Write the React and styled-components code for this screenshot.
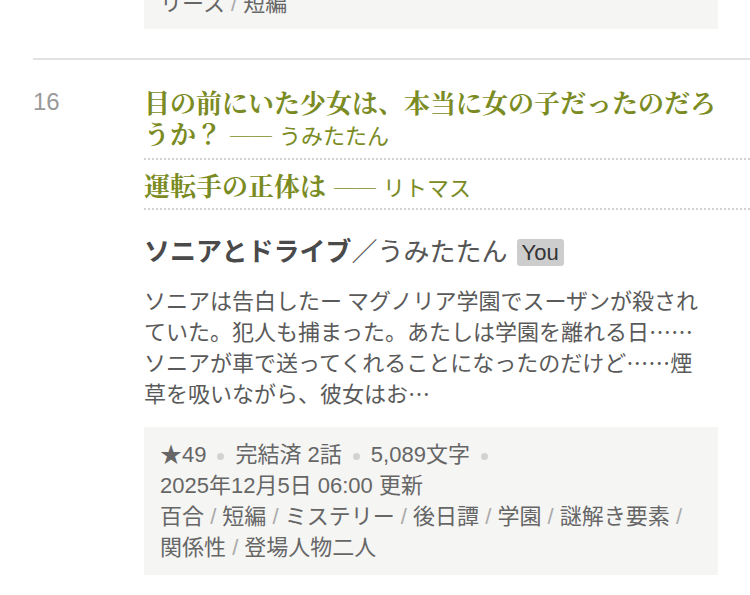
import styled, { createGlobalStyle } from 'styled-components'

const GlobalStyle = createGlobalStyle`
  body {
    margin: 0;
    background: #fff;
    font-family: "Liberation Sans", "Noto Sans CJK JP", sans-serif;
    overflow: hidden;
  }
`

const Page = styled.div`
  padding-left: 33px;
  width: 717px;
`

const PrevTail = styled.div`
  margin-top: -24px;
  padding-left: 111px;
  margin-bottom: 29px;
`

const Entry = styled.section`
  display: flex;
  padding-top: 26px;
  border-top: 2px solid #e2e2e2;
`

const Rank = styled.div`
  width: 111px;
  flex-shrink: 0;
  font-size: 24px;
  line-height: 31px;
  color: #9a9a9a;
`

const Body = styled.div`
  flex: 1;
  min-width: 0;
`

const TitleList = styled.ul`
  list-style: none;
  margin: 0;
  padding: 0;
`

const serif = `"Noto Serif CJK JP", "Liberation Serif", "Noto Sans CJK JP", serif`

const TitleItem = styled.li`
  padding: 9px 30px 8px 0;
  border-bottom: 2px dotted #d2d2d2;
  font-family: ${serif};
  font-size: 26px;
  line-height: 31px;

  &:first-child {
    padding-top: 0;
    padding-bottom: 10px;
  }
`

const TitleLink = styled.a`
  color: #7b8b23;
  text-decoration: none;
  font-weight: bold;
`

const Dash = styled.span`
  margin-left: 8px;
  color: #7b8b23;
  font-size: 21px;
  line-height: 20px;
  font-weight: bold;
`

const TitleAuthor = styled.span`
  margin-left: 7px;
  color: #7b8b23;
  font-family: "Liberation Sans", "Noto Sans CJK JP", sans-serif;
  font-size: 22px;
  line-height: 20px;
`

const StoryHead = styled.div`
  display: flex;
  align-items: center;
  margin-top: 27px;
  font-size: 26px;
  line-height: 31px;
  color: #4a4a4a;
`

const StoryName = styled.span`
  font-weight: bold;
`

const StoryAuthor = styled.span`
  color: #555;
`

const Badge = styled.span`
  margin-left: 9px;
  padding: 0 5px;
  font-family: "Liberation Sans", sans-serif;
  font-size: 22px;
  line-height: 27px;
  color: #333;
  background: #cdcdcd;
  border-radius: 3px;
`

const Desc = styled.p`
  margin: 16px 0 0;
  max-width: 562px;
  font-family: "Noto Sans CJK JP", "Liberation Sans", sans-serif;
  font-size: 22px;
  line-height: 31px;
  color: #5a5a5a;
`

const MetaBox = styled.div`
  margin-top: ${p => (p.$tail ? 0 : 19)}px;
  width: 574px;
  box-sizing: border-box;
  padding: ${p => (p.$tail ? '12px 16px 10px' : '12px 16px')};
  background: #f5f5f4;
  font-size: 22px;
  line-height: 31px;
  color: #666;
`

const Item = styled.span`
  white-space: nowrap;
`

const Dot = styled.span`
  display: inline-block;
  width: 7px;
  height: 7px;
  margin: 0 11px;
  border-radius: 50%;
  background: #d2d2d2;
  vertical-align: middle;
`

const Slash = styled.span`
  color: #aaa;
`

const Tags = ({ list }) =>
  list.map((t, i) => (
    <span key={t}>
      <Item>{t}</Item>
      {i < list.length - 1 && <Slash> / </Slash>}
    </span>
  ))

const App = () => {
  const titles = [
    { title: '目の前にいた少女は、本当に女の子だったのだろうか？', author: 'うみたたん' },
    { title: '運転手の正体は', author: 'リトマス' },
  ]

  return (
    <>
      <GlobalStyle />
      <Page>
        <PrevTail>
          <MetaBox $tail>
            <Tags list={['リース', '短編']} />
          </MetaBox>
        </PrevTail>

        <Entry>
          <Rank>16</Rank>
          <Body>
            <TitleList>
              {titles.map(t => (
                <TitleItem key={t.title}>
                  <TitleLink href="#">{t.title}</TitleLink>
                  <Dash>──</Dash>
                  <TitleAuthor>{t.author}</TitleAuthor>
                </TitleItem>
              ))}
            </TitleList>

            <StoryHead>
              <StoryName>ソニアとドライブ</StoryName>
              <StoryAuthor>／うみたたん</StoryAuthor>
              <Badge>You</Badge>
            </StoryHead>

            <Desc>
              ソニアは告白したー マグノリア学園でスーザンが殺されていた。犯人も捕まった。あたしは学園を離れる日……ソニアが車で送ってくれることになったのだけど……煙草を吸いながら、彼女はお…
            </Desc>

            <MetaBox>
              <Item>★49</Item>
              <Dot />
              <Item>完結済 2話</Item>
              <Dot />
              <Item>5,089文字</Item>
              <Dot />
              <Item>2025年12月5日 06:00 更新</Item>
              <br />
              <Tags list={['百合', '短編', 'ミステリー', '後日譚', '学園', '謎解き要素', '関係性', '登場人物二人']} />
            </MetaBox>
          </Body>
        </Entry>
      </Page>
    </>
  )
}

export default App
